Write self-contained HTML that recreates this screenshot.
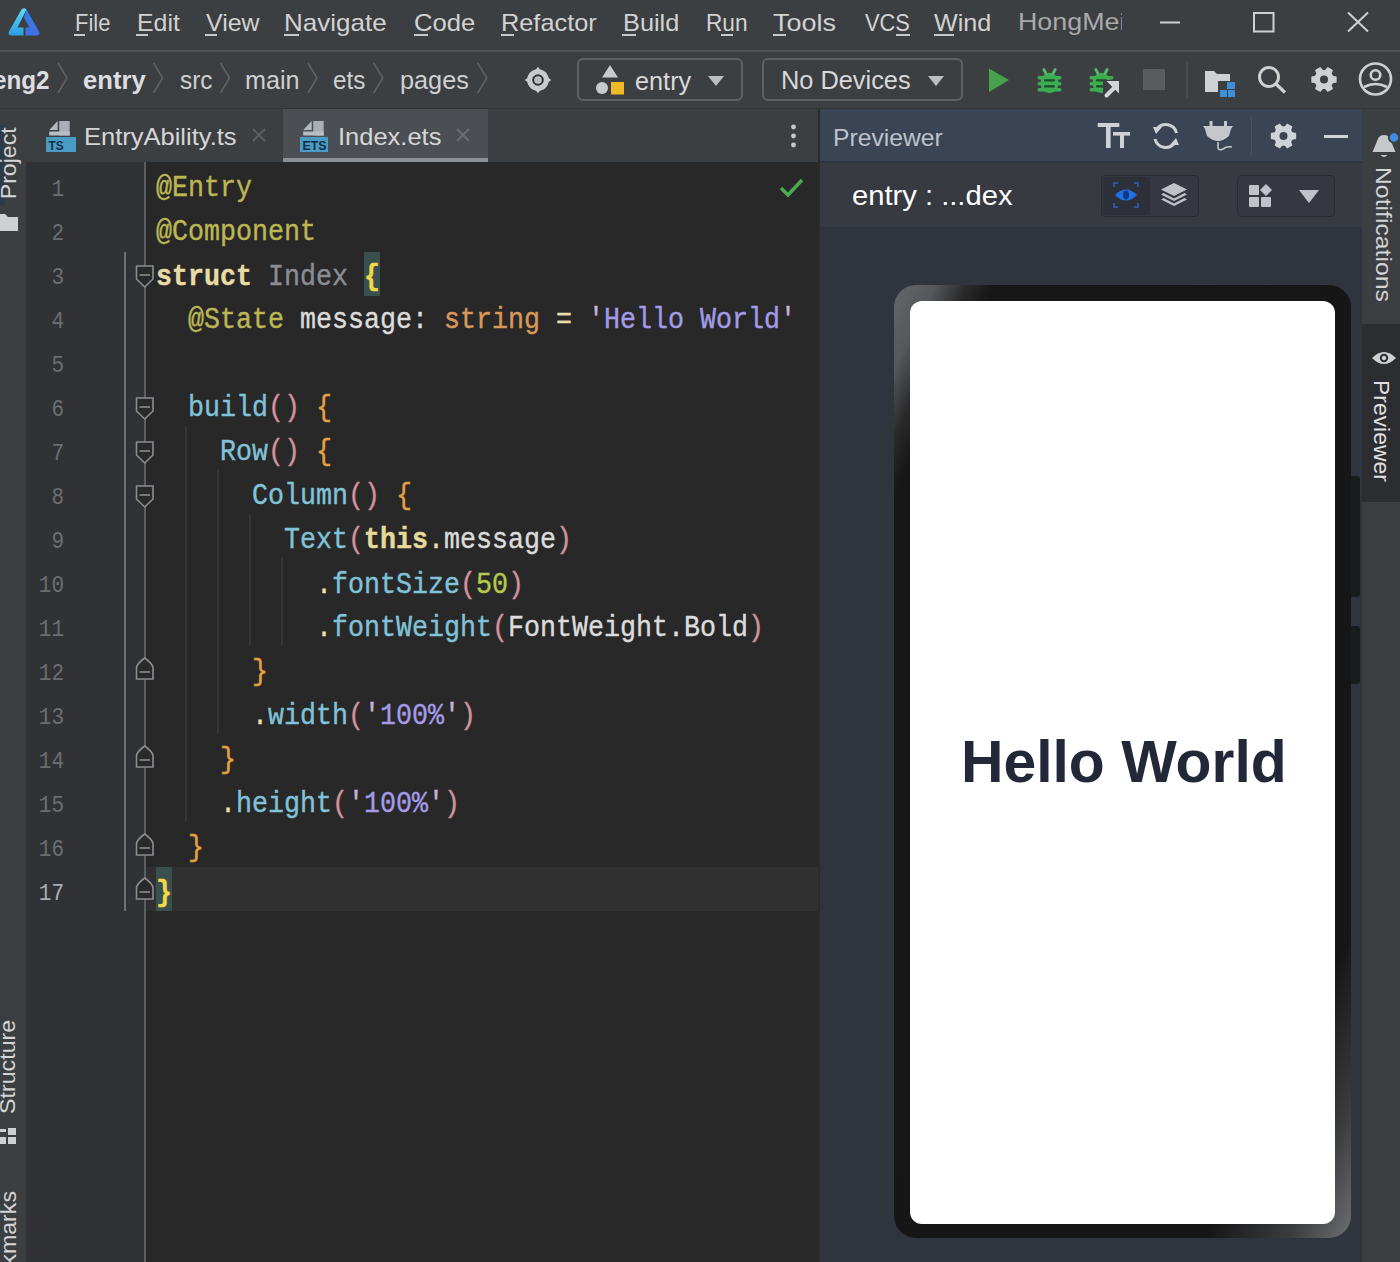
<!DOCTYPE html><html><head><meta charset="utf-8"><style>
*{margin:0;padding:0;box-sizing:border-box}
html,body{width:1400px;height:1262px;overflow:hidden;background:#2b2b2b;font-family:"Liberation Sans",sans-serif}
.a{position:absolute}
.t{white-space:pre;transform-origin:0 0}
svg{position:absolute;overflow:visible}
.code{font-family:"Liberation Mono",monospace;font-size:26.67px;line-height:39.286px;white-space:pre;left:156px;top:167px;color:#dcdcdc;transform:scaleY(1.12);transform-origin:0 0;-webkit-text-stroke:0.35px currentColor}
.ln{font-family:"Liberation Mono",monospace;font-size:21px;white-space:pre;color:#6a6e73;transform-origin:0 0}
.dec{color:#bdb654}
.kw{color:#e8dca6;font-weight:bold}
.kw2{color:#e6da98;font-weight:bold}
.dot{color:#e6dfa8}
.cls{color:#8a8e93}
.mb{color:#f2d94a;font-weight:bold}
.ty{color:#d9985a}
.eq{color:#e6dfa8}
.q{color:#c9b3d6}
.str{color:#a39be8}
.fn{color:#80c3d8}
.pa{color:#d4919a}
.br{color:#e5a23f}
.num{color:#b6c94e}
u{text-decoration:none}
</style></head><body><div class="a" style="left:0px;top:0px;width:1400px;height:50px;background:#3c3f41;"></div>
<div class="a" style="left:0px;top:50px;width:1400px;height:2px;background:#4e5053;"></div>
<div class="a" style="left:0px;top:52px;width:1400px;height:57px;background:#3c3f41;"></div>
<div class="a" style="left:0px;top:108px;width:1400px;height:1px;background:#323436;"></div>
<div class="a" style="left:0px;top:109px;width:26px;height:1153px;background:#3c3f41;"></div>
<div class="a" style="left:0px;top:125px;width:5px;height:80px;background:#2f3a48;"></div>
<div class="a" style="left:26px;top:109px;width:1px;height:1153px;background:#45474a;"></div>
<div class="a" style="left:26px;top:109px;width:792px;height:53px;background:#3c3f41;"></div>
<div class="a" style="left:283px;top:109px;width:205px;height:53px;background:#4b4e52;"></div>
<div class="a" style="left:283px;top:158px;width:205px;height:4px;background:#8c8f93;"></div>
<div class="a" style="left:26px;top:162px;width:119px;height:1100px;background:#303236;"></div>
<div class="a" style="left:145px;top:162px;width:673px;height:1100px;background:#282828;"></div>
<div class="a" style="left:145px;top:867px;width:673px;height:44px;background:#303030;"></div>
<div class="a" style="left:364px;top:252px;width:16px;height:44px;background:#3a504d;"></div>
<div class="a" style="left:156px;top:867px;width:16px;height:44px;background:#3a504d;"></div>
<div class="a" style="left:818px;top:109px;width:2px;height:1153px;background:#2a2b2d;"></div>
<div class="a" style="left:820px;top:109px;width:542px;height:53px;background:#3a4454;"></div>
<div class="a" style="left:820px;top:161px;width:542px;height:2px;background:#2e3440;"></div>
<div class="a" style="left:820px;top:163px;width:542px;height:64px;background:#383a42;"></div>
<div class="a" style="left:820px;top:227px;width:542px;height:1035px;background:#2f343d;"></div>
<div class="a" style="left:1362px;top:109px;width:38px;height:1153px;background:#3c3f41;"></div>
<div class="a" style="left:1362px;top:324px;width:38px;height:178px;background:#2b2d30;"></div>
<div class="a t" style="left:75.20px;top:9.48px;font-size:24px;line-height:27.58px;color:#d2d2d2;transform:scaleX(0.9154);">File</div>
<div class="a t" style="left:136.50px;top:9.48px;font-size:24px;line-height:27.58px;color:#d2d2d2;transform:scaleX(1.0357);">Edit</div>
<div class="a t" style="left:205.50px;top:9.48px;font-size:24px;line-height:27.58px;color:#d2d2d2;transform:scaleX(1.0385);">View</div>
<div class="a t" style="left:283.80px;top:9.48px;font-size:24px;line-height:27.58px;color:#d2d2d2;transform:scaleX(1.0832);">Navigate</div>
<div class="a t" style="left:414.30px;top:9.48px;font-size:24px;line-height:27.58px;color:#d2d2d2;transform:scaleX(1.0684);">Code</div>
<div class="a t" style="left:501.00px;top:9.48px;font-size:24px;line-height:27.58px;color:#d2d2d2;transform:scaleX(1.0549);">Refactor</div>
<div class="a t" style="left:622.60px;top:9.48px;font-size:24px;line-height:27.58px;color:#d2d2d2;transform:scaleX(1.0547);">Build</div>
<div class="a t" style="left:705.50px;top:9.48px;font-size:24px;line-height:27.58px;color:#d2d2d2;transform:scaleX(0.9432);">Run</div>
<div class="a t" style="left:773.40px;top:9.48px;font-size:24px;line-height:27.58px;color:#d2d2d2;transform:scaleX(1.1232);">Tools</div>
<div class="a t" style="left:864.90px;top:9.48px;font-size:24px;line-height:27.58px;color:#d2d2d2;transform:scaleX(0.9082);">VCS</div>
<div class="a t" style="left:934.00px;top:9.48px;font-size:24px;line-height:27.58px;color:#d2d2d2;transform:scaleX(1.0491);">Wind</div>
<div class="a" style="left:74px;top:34px;width:11px;height:2px;background:#c8c8c8;"></div>
<div class="a" style="left:136px;top:34px;width:12px;height:2px;background:#c8c8c8;"></div>
<div class="a" style="left:205px;top:34px;width:12px;height:2px;background:#c8c8c8;"></div>
<div class="a" style="left:284px;top:34px;width:15px;height:2px;background:#c8c8c8;"></div>
<div class="a" style="left:414px;top:34px;width:14px;height:2px;background:#c8c8c8;"></div>
<div class="a" style="left:501px;top:34px;width:13px;height:2px;background:#c8c8c8;"></div>
<div class="a" style="left:622px;top:34px;width:14px;height:2px;background:#c8c8c8;"></div>
<div class="a" style="left:721px;top:34px;width:12px;height:2px;background:#c8c8c8;"></div>
<div class="a" style="left:773px;top:34px;width:13px;height:2px;background:#c8c8c8;"></div>
<div class="a" style="left:896px;top:34px;width:14px;height:2px;background:#c8c8c8;"></div>
<div class="a" style="left:934px;top:34px;width:20px;height:2px;background:#c8c8c8;"></div>
<div class="a t" style="left:1017.70px;top:8.28px;font-size:24px;line-height:27.58px;color:#a9a9a9;transform:scaleX(1.1177);">HongMei</div>
<div class="a" style="left:1122px;top:0px;width:30px;height:50px;background:#3c3f41;"></div>
<svg style="left:0;top:0" width="1400" height="50"><g stroke="#d0d0d0" stroke-width="2" fill="none"><line x1="1160" y1="22.5" x2="1180" y2="22.5"/><rect x="1254" y="13" width="19.5" height="18.5"/><line x1="1348" y1="12.5" x2="1368" y2="31.5"/><line x1="1368" y1="12.5" x2="1348" y2="31.5"/></g></svg>
<svg style="left:0;top:0" width="50" height="45" viewBox="0 0 50 45">
<defs><linearGradient id="lgL" x1="0" y1="0" x2="0" y2="1"><stop offset="0" stop-color="#62d8f6"/><stop offset="1" stop-color="#2a9ee0"/></linearGradient>
<linearGradient id="lgR" x1="0" y1="0" x2="0" y2="1"><stop offset="0" stop-color="#2f7ee8"/><stop offset="1" stop-color="#4070e0"/></linearGradient></defs>
<path d="M21.5 9.5 Q24 7 26.5 9.5 L17.5 27.5 L23.5 27.5 L23.5 35.5 L11 35.5 Q7.5 35 9 31.5 Z" fill="url(#lgL)"/>
<path d="M26.5 9.5 L39 31.5 Q40.5 35 37 35.5 L25.5 35.5 L25.5 27.5 L29.5 27.5 L24 17.5 Z" fill="url(#lgR)"/>
</svg>
<div class="a t" style="left:-7.26px;top:65.97px;font-size:25px;line-height:28.73px;color:#dcdde0;font-weight:bold;transform:scaleX(0.9700);">eng2</div>
<div class="a t" style="left:83.00px;top:65.97px;font-size:25px;line-height:28.73px;color:#dcdde0;font-weight:bold;transform:scaleX(1.0246);">entry</div>
<div class="a t" style="left:179.50px;top:65.97px;font-size:25px;line-height:28.73px;color:#cfd0d2;transform:scaleX(0.9727);">src</div>
<div class="a t" style="left:244.60px;top:65.97px;font-size:25px;line-height:28.73px;color:#cfd0d2;transform:scaleX(1.0074);">main</div>
<div class="a t" style="left:332.80px;top:65.97px;font-size:25px;line-height:28.73px;color:#cfd0d2;transform:scaleX(0.9697);">ets</div>
<div class="a t" style="left:399.70px;top:65.97px;font-size:25px;line-height:28.73px;color:#cfd0d2;transform:scaleX(1.0103);">pages</div>
<svg style="left:0;top:52px" width="520" height="57"><g stroke="#5f6164" stroke-width="1.6" fill="none"><polyline points="58,11 67,26 58,41"/><polyline points="153.6,11 162.6,26 153.6,41"/><polyline points="220.5,11 229.5,26 220.5,41"/><polyline points="308,11 317,26 308,41"/><polyline points="373.7,11 382.7,26 373.7,41"/><polyline points="477.7,11 486.7,26 477.7,41"/></g></svg>
<svg style="left:524px;top:66px" width="28" height="28" viewBox="0 0 28 28">
<circle cx="14" cy="14" r="10.8" fill="#c9cacc"/>
<path d="M14 0.8 L16.5 4 L11.5 4 Z M14 27.2 L16.5 24 L11.5 24 Z M0.8 14 L4 11.5 L4 16.5 Z M27.2 14 L24 11.5 L24 16.5 Z" fill="#c9cacc"/>
<circle cx="14" cy="14" r="4.8" fill="none" stroke="#2e3032" stroke-width="2"/><circle cx="14" cy="14" r="3" fill="#b9babc"/>
</svg>
<div class="a" style="left:577px;top:58px;width:166px;height:43px;background:transparent;border:2px solid #5f6164;border-radius:6px;"></div>
<svg style="left:590px;top:60px" width="40" height="40">
<polygon points="20,5 28,17.5 12,17.5" fill="#c9cacc"/>
<circle cx="12" cy="28" r="6" fill="#c9cacc"/>
<rect x="21" y="22" width="13" height="12.5" fill="#f0b92a"/>
</svg>
<div class="a t" style="left:635.00px;top:67.38px;font-size:25px;line-height:28.73px;color:#d8d8d8;transform:scaleX(1.0107);">entry</div>
<svg style="left:700px;top:70px" width="30" height="20"><polygon points="8,6 24,6 16,16" fill="#bdbec0"/></svg>
<div class="a" style="left:762px;top:58px;width:201px;height:43px;background:transparent;border:2px solid #5f6164;border-radius:6px;"></div>
<div class="a t" style="left:781.00px;top:65.87px;font-size:26px;line-height:29.87px;color:#d8d8d8;transform:scaleX(0.9752);">No Devices</div>
<svg style="left:920px;top:70px" width="30" height="20"><polygon points="8,6 24,6 16,16" fill="#bdbec0"/></svg>
<svg style="left:980px;top:60px" width="40" height="40"><polygon points="9,8.5 29,20 9,32" fill="#45a34b"/></svg>
<svg style="left:1037px;top:66px" width="26" height="28"><g fill="#3dad52"><ellipse cx="12.5" cy="17" rx="9" ry="10.2"/>
<rect x="0.5" y="10" width="24" height="3.4" rx="1.7"/><rect x="0.5" y="16" width="24" height="3.4" rx="1.7"/><rect x="0.5" y="22" width="24" height="3.4" rx="1.7"/>
<path d="M9 7.5 L6.8 3.5 M16 7.5 L18.2 3.5" stroke="#56b86a" stroke-width="2.8" stroke-linecap="round"/></g>
<rect x="7" y="13.2" width="11" height="2.4" rx="1" fill="#1f4a2a"/><rect x="7" y="19.2" width="11" height="2.4" rx="1" fill="#1f4a2a"/></svg>
<svg style="left:1089px;top:66px" width="34" height="32"><g fill="#3dad52"><ellipse cx="12.5" cy="17" rx="9" ry="10.2"/>
<rect x="0.5" y="10" width="24" height="3.4" rx="1.7"/><rect x="0.5" y="16" width="24" height="3.4" rx="1.7"/><rect x="0.5" y="22" width="24" height="3.4" rx="1.7"/>
<path d="M9 7.5 L6.8 3.5 M16 7.5 L18.2 3.5" stroke="#56b86a" stroke-width="2.8" stroke-linecap="round"/></g>
<rect x="7" y="13.2" width="11" height="2.4" rx="1" fill="#1f4a2a"/><rect x="7" y="19.2" width="11" height="2.4" rx="1" fill="#1f4a2a"/><path d="M14 14 L30 14 L30 31 L14 31 Z" fill="#3c3f41"/><path d="M17.5 29.5 L26 21" stroke="#d4d5d7" stroke-width="4" stroke-linecap="round"/><polygon points="17.5,15 30,15 30,27.5" fill="#d4d5d7"/></svg>
<div class="a" style="left:1143px;top:69px;width:22px;height:21px;background:#5a5c5f;"></div>
<div class="a" style="left:1186px;top:61px;width:2px;height:38px;background:#4b4d50;"></div>
<svg style="left:1204px;top:68px" width="34" height="30">
<path d="M1 3 L10 3 L13 6 L26 6 L26 24 L1 24 Z" fill="#cfd0d2"/>
<rect x="14" y="13" width="18" height="17" fill="#3c3f41"/>
<rect x="23" y="14" width="8" height="7" fill="#3d8fd8"/><rect x="16" y="22" width="7" height="7" fill="#3d8fd8"/><rect x="24" y="22" width="7" height="7" fill="#3d8fd8"/>
</svg>
<svg style="left:1256px;top:64px" width="32" height="32"><circle cx="13" cy="13" r="9.5" stroke="#d0d0d0" stroke-width="3" fill="none"/><line x1="20" y1="20" x2="29" y2="28.5" stroke="#d0d0d0" stroke-width="3.2"/></svg>
<svg style="left:1308px;top:64px" width="32" height="32"><path d="M24.74,11.77 L28.64,12.47 L28.64,18.53 L24.74,19.23 L23.60,21.20 L24.95,24.93 L19.69,27.96 L17.14,24.93 L14.86,24.93 L12.31,27.96 L7.05,24.93 L8.40,21.20 L7.26,19.23 L3.36,18.53 L3.36,12.47 L7.26,11.77 L8.40,9.80 L7.05,6.07 L12.31,3.04 L14.86,6.07 L17.14,6.07 L19.69,3.04 L24.95,6.07 L23.60,9.80 Z" fill="#cfd0d2"/><circle cx="16" cy="15.5" r="9.5" fill="#cfd0d2"/><circle cx="16" cy="15.5" r="4" fill="#3c3f41"/></svg>
<svg style="left:1358px;top:62px" width="36" height="36"><circle cx="17.5" cy="17" r="15.5" stroke="#d0d0d0" stroke-width="2.6" fill="none"/><circle cx="17.5" cy="13" r="4.8" stroke="#d0d0d0" stroke-width="2.6" fill="none"/><path d="M6 25 Q17.5 19 29 25" stroke="#d0d0d0" stroke-width="2.6" fill="none"/></svg>
<div class="a t" style="left:0;top:0;font-size:22px;line-height:25.28px;color:#d4d4d4;transform:translate(-4.00px,199.30px) rotate(-90deg) scaleX(1.0515)">Project</div>
<svg style="left:0;top:213px" width="20" height="20"><path d="M-4 1 L5 1 L8 4 L18 4 L18 18 L-4 18 Z" fill="#cfd0d2"/></svg>
<div class="a t" style="left:0;top:0;font-size:22px;line-height:25.28px;color:#d4d4d4;transform:translate(-5.00px,1114.00px) rotate(-90deg) scaleX(1.0562)">Structure</div>
<svg style="left:0;top:1126px" width="20" height="22"><rect x="8" y="2" width="8" height="7" fill="#cfd0d2"/><rect x="0" y="11" width="6" height="7" fill="#cfd0d2"/><rect x="8" y="11" width="8" height="7" fill="#cfd0d2"/><rect x="0" y="3" width="6" height="3" fill="#cfd0d2"/></svg>
<div class="a t" style="left:0;top:0;font-size:22px;line-height:25.28px;color:#d4d4d4;transform:translate(-4.00px,1307.00px) rotate(-90deg) scaleX(1.0545)">Bookmarks</div>
<svg style="left:1370px;top:128px" width="30" height="34"><path d="M2.5 24 L7.5 12 Q9 7 14 7 Q19 7 20.5 12 L25.5 24 Z" fill="#c6c7c9"/><path d="M10.5 27 L17.5 27 Q14 31 10.5 27 Z" fill="#c6c7c9"/><circle cx="24" cy="9.5" r="5.2" fill="#3d8ee0" stroke="#3c3f41" stroke-width="1.8"/></svg>
<div class="a t" style="left:0;top:0;font-size:22px;line-height:25.28px;color:#d4d4d4;transform:translate(1396.00px,167.00px) rotate(90deg) scaleX(1.1250)">Notifications</div>
<svg style="left:1371px;top:348px" width="28" height="20"><path d="M1 10 Q13 -2 25 10 Q13 22 1 10 Z" fill="#cfd0d2"/><circle cx="13" cy="10" r="4.2" fill="#2b2d30"/><circle cx="13" cy="10" r="2.2" fill="#cfd0d2"/></svg>
<div class="a t" style="left:0;top:0;font-size:22px;line-height:25.28px;color:#e0e0e0;transform:translate(1394.00px,380.00px) rotate(90deg) scaleX(1.0408)">Previewer</div>
<svg style="left:0;top:0" width="400" height="160">
<path d="M49.2 130 L57.7 121 L57.7 130 Z" fill="#b4b9be"/><rect x="59.2" y="121" width="10.5" height="14.5" fill="#a9afb5"/><rect x="49.2" y="131.5" width="20.5" height="4" fill="#b9bec3"/>
<rect x="46" y="137" width="30" height="15" fill="#4a9cc4"/>
<text x="48.5" y="149.5" font-family="Liberation Sans" font-weight="bold" font-size="12.5" fill="#0e2e48" textLength="15" lengthAdjust="spacingAndGlyphs">TS</text></svg>
<div class="a t" style="left:84.00px;top:123.28px;font-size:24px;line-height:27.58px;color:#d6d6d6;transform:scaleX(1.0625);">EntryAbility.ts</div>
<svg style="left:250px;top:126px" width="20" height="20"><path d="M3 3 L15 15 M15 3 L3 15" stroke="#5f6164" stroke-width="1.8"/></svg>
<svg style="left:0;top:0" width="400" height="160">
<path d="M303.2 130 L311.7 121 L311.7 130 Z" fill="#b4b9be"/><rect x="313.2" y="121" width="10.5" height="14.5" fill="#a9afb5"/><rect x="303.2" y="131.5" width="20.5" height="4" fill="#b9bec3"/>
<rect x="300" y="137" width="28" height="15" fill="#4a9cc4"/>
<text x="302.5" y="149.5" font-family="Liberation Sans" font-weight="bold" font-size="12" fill="#0e2e48" textLength="24" lengthAdjust="spacingAndGlyphs">ETS</text></svg>
<div class="a t" style="left:338.00px;top:123.28px;font-size:24px;line-height:27.58px;color:#d6d6d6;transform:scaleX(1.0619);">Index.ets</div>
<svg style="left:454px;top:126px" width="20" height="20"><path d="M3 3 L15 15 M15 3 L3 15" stroke="#6c6f72" stroke-width="1.8"/></svg>
<svg style="left:788px;top:122px" width="12" height="30"><circle cx="5.5" cy="5" r="2.4" fill="#c8c8c8"/><circle cx="5.5" cy="14" r="2.4" fill="#c8c8c8"/><circle cx="5.5" cy="23" r="2.4" fill="#c8c8c8"/></svg>
<div class="a ln" style="left:51.4px;top:175.5px;line-height:26px;color:#6a6e73;transform:scaleY(1.12)">1</div>
<div class="a ln" style="left:51.4px;top:219.5px;line-height:26px;color:#6a6e73;transform:scaleY(1.12)">2</div>
<div class="a ln" style="left:51.4px;top:263.5px;line-height:26px;color:#6a6e73;transform:scaleY(1.12)">3</div>
<div class="a ln" style="left:51.4px;top:307.5px;line-height:26px;color:#6a6e73;transform:scaleY(1.12)">4</div>
<div class="a ln" style="left:51.4px;top:351.5px;line-height:26px;color:#6a6e73;transform:scaleY(1.12)">5</div>
<div class="a ln" style="left:51.4px;top:395.5px;line-height:26px;color:#6a6e73;transform:scaleY(1.12)">6</div>
<div class="a ln" style="left:51.4px;top:439.5px;line-height:26px;color:#6a6e73;transform:scaleY(1.12)">7</div>
<div class="a ln" style="left:51.4px;top:483.5px;line-height:26px;color:#6a6e73;transform:scaleY(1.12)">8</div>
<div class="a ln" style="left:51.4px;top:527.5px;line-height:26px;color:#6a6e73;transform:scaleY(1.12)">9</div>
<div class="a ln" style="left:38.8px;top:571.5px;line-height:26px;color:#6a6e73;transform:scaleY(1.12)">10</div>
<div class="a ln" style="left:38.8px;top:615.5px;line-height:26px;color:#6a6e73;transform:scaleY(1.12)">11</div>
<div class="a ln" style="left:38.8px;top:659.5px;line-height:26px;color:#6a6e73;transform:scaleY(1.12)">12</div>
<div class="a ln" style="left:38.8px;top:703.5px;line-height:26px;color:#6a6e73;transform:scaleY(1.12)">13</div>
<div class="a ln" style="left:38.8px;top:747.5px;line-height:26px;color:#6a6e73;transform:scaleY(1.12)">14</div>
<div class="a ln" style="left:38.8px;top:791.5px;line-height:26px;color:#6a6e73;transform:scaleY(1.12)">15</div>
<div class="a ln" style="left:38.8px;top:835.5px;line-height:26px;color:#6a6e73;transform:scaleY(1.12)">16</div>
<div class="a ln" style="left:38.8px;top:879.5px;line-height:26px;color:#a8aeb5;transform:scaleY(1.12)">17</div>
<div class="a" style="left:144px;top:162px;width:2px;height:1100px;background:#5b5e61;"></div>
<div class="a" style="left:124px;top:252px;width:2px;height:659px;background:#6c6f73;"></div>
<svg style="left:0;top:0" width="200" height="1262"><path d="M136.5 266 L153 266 L153 279 L144.75 287 L136.5 279 Z" fill="#29292a" stroke="#8a8d91" stroke-width="1.6"/><line x1="139.5" y1="275" x2="150" y2="275" stroke="#8a8d91" stroke-width="1.6"/><path d="M136.5 398 L153 398 L153 411 L144.75 419 L136.5 411 Z" fill="#29292a" stroke="#8a8d91" stroke-width="1.6"/><line x1="139.5" y1="407" x2="150" y2="407" stroke="#8a8d91" stroke-width="1.6"/><path d="M136.5 442 L153 442 L153 455 L144.75 463 L136.5 455 Z" fill="#29292a" stroke="#8a8d91" stroke-width="1.6"/><line x1="139.5" y1="451" x2="150" y2="451" stroke="#8a8d91" stroke-width="1.6"/><path d="M136.5 486 L153 486 L153 499 L144.75 507 L136.5 499 Z" fill="#29292a" stroke="#8a8d91" stroke-width="1.6"/><line x1="139.5" y1="495" x2="150" y2="495" stroke="#8a8d91" stroke-width="1.6"/><path d="M136.5 679 L153 679 L153 668 Q153 664 144.75 658 Q136.5 664 136.5 668 Z" fill="#29292a" stroke="#8a8d91" stroke-width="1.6"/><line x1="139.5" y1="672" x2="150" y2="672" stroke="#8a8d91" stroke-width="1.6"/><path d="M136.5 767 L153 767 L153 756 Q153 752 144.75 746 Q136.5 752 136.5 756 Z" fill="#29292a" stroke="#8a8d91" stroke-width="1.6"/><line x1="139.5" y1="760" x2="150" y2="760" stroke="#8a8d91" stroke-width="1.6"/><path d="M136.5 855 L153 855 L153 844 Q153 840 144.75 834 Q136.5 840 136.5 844 Z" fill="#29292a" stroke="#8a8d91" stroke-width="1.6"/><line x1="139.5" y1="848" x2="150" y2="848" stroke="#8a8d91" stroke-width="1.6"/><path d="M136.5 899 L153 899 L153 888 Q153 884 144.75 878 Q136.5 884 136.5 888 Z" fill="#29292a" stroke="#8a8d91" stroke-width="1.6"/><line x1="139.5" y1="892" x2="150" y2="892" stroke="#8a8d91" stroke-width="1.6"/></svg>
<div class="a" style="left:185px;top:426px;width:1.5px;height:396px;background:#363636;"></div>
<div class="a" style="left:217px;top:470px;width:1.5px;height:264px;background:#363636;"></div>
<div class="a" style="left:249px;top:514px;width:1.5px;height:132px;background:#363636;"></div>
<div class="a" style="left:281px;top:558px;width:1.5px;height:88px;background:#363636;"></div>
<div class="a code"><span class="dec">@Entry</span>
<span class="dec">@Component</span>
<span class="kw">struct</span> <span class="cls">Index</span> <span class="mb">{</span>
  <span class="dec">@State</span> message: <span class="ty">string</span> <span class="eq">=</span> <span class="q">'</span><span class="str">Hello World</span><span class="q">'</span>

  <span class="fn">build</span><span class="pa">()</span> <span class="br">{</span>
    <span class="fn">Row</span><span class="pa">()</span> <span class="br">{</span>
      <span class="fn">Column</span><span class="pa">()</span> <span class="br">{</span>
        <span class="fn">Text</span><span class="pa">(</span><span class="kw2">this</span><span class="dot">.</span>message<span class="pa">)</span>
          <span class="dot">.</span><span class="fn">fontSize</span><span class="pa">(</span><span class="num">50</span><span class="pa">)</span>
          <span class="dot">.</span><span class="fn">fontWeight</span><span class="pa">(</span>FontWeight.Bold<span class="pa">)</span>
      <span class="br">}</span>
      <span class="dot">.</span><span class="fn">width</span><span class="pa">(</span><span class="q">'</span><span class="str">100%</span><span class="q">'</span><span class="pa">)</span>
    <span class="br">}</span>
    <span class="dot">.</span><span class="fn">height</span><span class="pa">(</span><span class="q">'</span><span class="str">100%</span><span class="q">'</span><span class="pa">)</span>
  <span class="br">}</span>
<span class="mb">}</span></div>
<svg style="left:778px;top:176px" width="28" height="24"><path d="M3 12 L10 19 L24 4" stroke="#4caa50" stroke-width="3.5" fill="none"/></svg>
<div class="a t" style="left:833.00px;top:124.28px;font-size:24px;line-height:27.58px;color:#bcc2ca;transform:scaleX(1.0280);">Previewer</div>
<svg style="left:1080px;top:110px" width="60" height="50"><g fill="#cdd1d6">
<rect x="17.7" y="13" width="21.6" height="4"/><rect x="26" y="13" width="4.6" height="25"/>
<rect x="33" y="22" width="17" height="3.6"/><rect x="40" y="22" width="4" height="16"/></g></svg>
<svg style="left:1150px;top:120px" width="32" height="32"><g stroke="#cdd1d6" stroke-width="3" fill="none">
<path d="M26.5 13 A11 11 0 0 0 7 9"/><path d="M5 19 A11 11 0 0 0 24.5 23"/></g>
<polygon points="3,7 12,7 6,14" fill="#cdd1d6"/><polygon points="29,25 20,25 26,18" fill="#cdd1d6"/></svg>
<svg style="left:1200px;top:118px" width="40" height="36"><g fill="#c4c8cd">
<path d="M3 8 L33 8 L31 11 L29 18 Q18 28 7 18 L5 11 Z"/><rect x="9.5" y="3" width="3" height="7"/><rect x="24" y="3" width="3" height="7"/></g>
<path d="M18 24 L18 30 Q19 33 23 31 Q27 28 32 29" stroke="#c4c8cd" stroke-width="1.6" fill="none"/></svg>
<div class="a" style="left:1251px;top:117px;width:1px;height:38px;background:#485264;"></div>
<svg style="left:1268px;top:120px" width="32" height="32"><path d="M24.24,12.27 L28.14,12.97 L28.14,19.03 L24.24,19.73 L23.10,21.70 L24.45,25.43 L19.19,28.46 L16.64,25.43 L14.36,25.43 L11.81,28.46 L6.55,25.43 L7.90,21.70 L6.76,19.73 L2.86,19.03 L2.86,12.97 L6.76,12.27 L7.90,10.30 L6.55,6.57 L11.81,3.54 L14.36,6.57 L16.64,6.57 L19.19,3.54 L24.45,6.57 L23.10,10.30 Z" fill="#cfd3d8"/><circle cx="15.5" cy="16" r="9.5" fill="#cfd3d8"/><circle cx="15.5" cy="16" r="4" fill="#3a4454"/></svg>
<div class="a" style="left:1324px;top:134.5px;width:24px;height:3px;background:#d0d3d8;"></div>
<div class="a t" style="left:852.00px;top:180.26px;font-size:28px;line-height:32.17px;color:#ffffff;transform:scaleX(1.0416);">entry : ...dex</div>
<div class="a" style="left:1101px;top:175px;width:98px;height:42px;background:#353840;border:1.5px solid #2a2c32;border-radius:4px;"></div>
<div class="a" style="left:1103px;top:177px;width:47px;height:38px;background:#2d3038;border-radius:3px;"></div>
<svg style="left:1112px;top:181px" width="28" height="28"><g fill="none" stroke="#2f62c8" stroke-width="1.4"><path d="M2 6 L2 2 L6 2 M22 2 L26 2 L26 6 M26 22 L26 26 L22 26 M6 26 L2 26 L2 22"/></g>
<path d="M3 14 Q14 3 25 14 Q14 25 3 14 Z" fill="#1e72e6"/><ellipse cx="14" cy="14" rx="3" ry="4.4" fill="#113a80"/></svg>
<svg style="left:1158px;top:181px" width="32" height="30"><g fill="#bfc3c9">
<path d="M16 20 L3 13.5 L5.5 12 L16 17.5 L26.5 12 L29 13.5 Z"/><path d="M16 25 L3 18.5 L5.5 17 L16 22.5 L26.5 17 L29 18.5 Z"/>
<path d="M16 2 L29 8.5 L16 15 L3 8.5 Z"/></g></svg>
<div class="a" style="left:1237px;top:175px;width:98px;height:42px;background:#353840;border:1.5px solid #2a2c32;border-radius:4px;"></div>
<svg style="left:1248px;top:183px" width="28" height="26"><g fill="#bfc3c9">
<rect x="1" y="2" width="10" height="10" rx="1"/><rect x="1" y="14" width="10" height="10" rx="1"/><rect x="13" y="14" width="10" height="10" rx="1"/>
<path d="M18 1 L24 7 L18 13 L12 7 Z"/></g></svg>
<svg style="left:1296px;top:186px" width="28" height="22"><polygon points="3,4 23,4 13,17" fill="#bfc3c9"/></svg>
<div class="a" style="left:894px;top:285px;width:457px;height:953px;border-radius:22px;background:linear-gradient(to bottom right,#646769 0%,#55575a 4.5%,#2a2a2b 8%,#171718 11%,#161617 84%,#3a3b3d 93%,#6c6f72 100%)"></div>
<div class="a" style="left:1351px;top:476px;width:9px;height:121px;background:#1a1b1c;border-radius:0 3px 3px 0;"></div>
<div class="a" style="left:1351px;top:626px;width:9px;height:58px;background:#1a1b1c;border-radius:0 3px 3px 0;"></div>
<div class="a" style="left:910px;top:301px;width:425px;height:923px;background:#ffffff;border-radius:12px;"></div>
<div class="a t" style="left:961.00px;top:729.11px;font-size:59px;line-height:67.79px;color:#232838;font-weight:bold;transform:scaleX(0.9969);">Hello World</div></body></html>
